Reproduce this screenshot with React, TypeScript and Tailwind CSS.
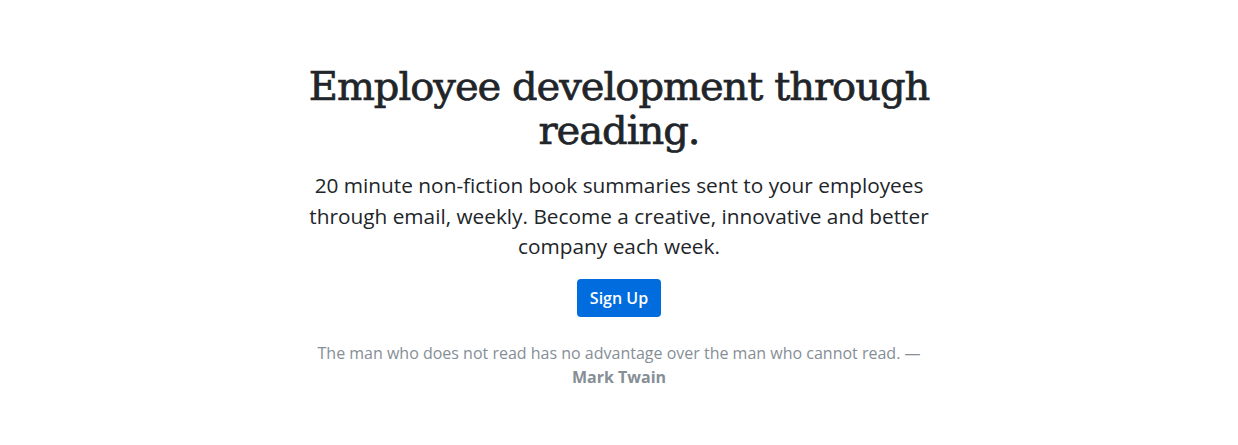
export default function App() {
  return (
    <div className="min-h-[445px] w-full bg-white flex flex-col items-center pt-[64px] font-['Open_Sans',sans-serif]">
      <div className="w-[660px] flex flex-col items-center text-center">
        <h1 className="font-['DejaVu_Serif',serif] text-[40px] leading-[44px] text-[#212529] tracking-[-1px] [-webkit-text-stroke:0.7px_#212529]">
          Employee development through reading.
        </h1>
        <p className="mt-[18px] w-[640px] text-[20.8px] leading-[30.5px] text-[#212529]">
          20 minute non-fiction book summaries sent to your employees through email, weekly. Become a creative, innovative and better company each week.
        </p>
        <button className="mt-[17px] h-[38px] px-[13px] rounded-[4px] bg-[#006cde] text-white text-[16px] font-semibold">
          Sign Up
        </button>
        <p className="mt-[24px] text-[16px] leading-[24px] text-[#868e96]">
          The man who does not read has no advantage over the man who cannot read. — <br />
          <span className="font-bold">Mark Twain</span>
        </p>
      </div>
    </div>
  );
}
